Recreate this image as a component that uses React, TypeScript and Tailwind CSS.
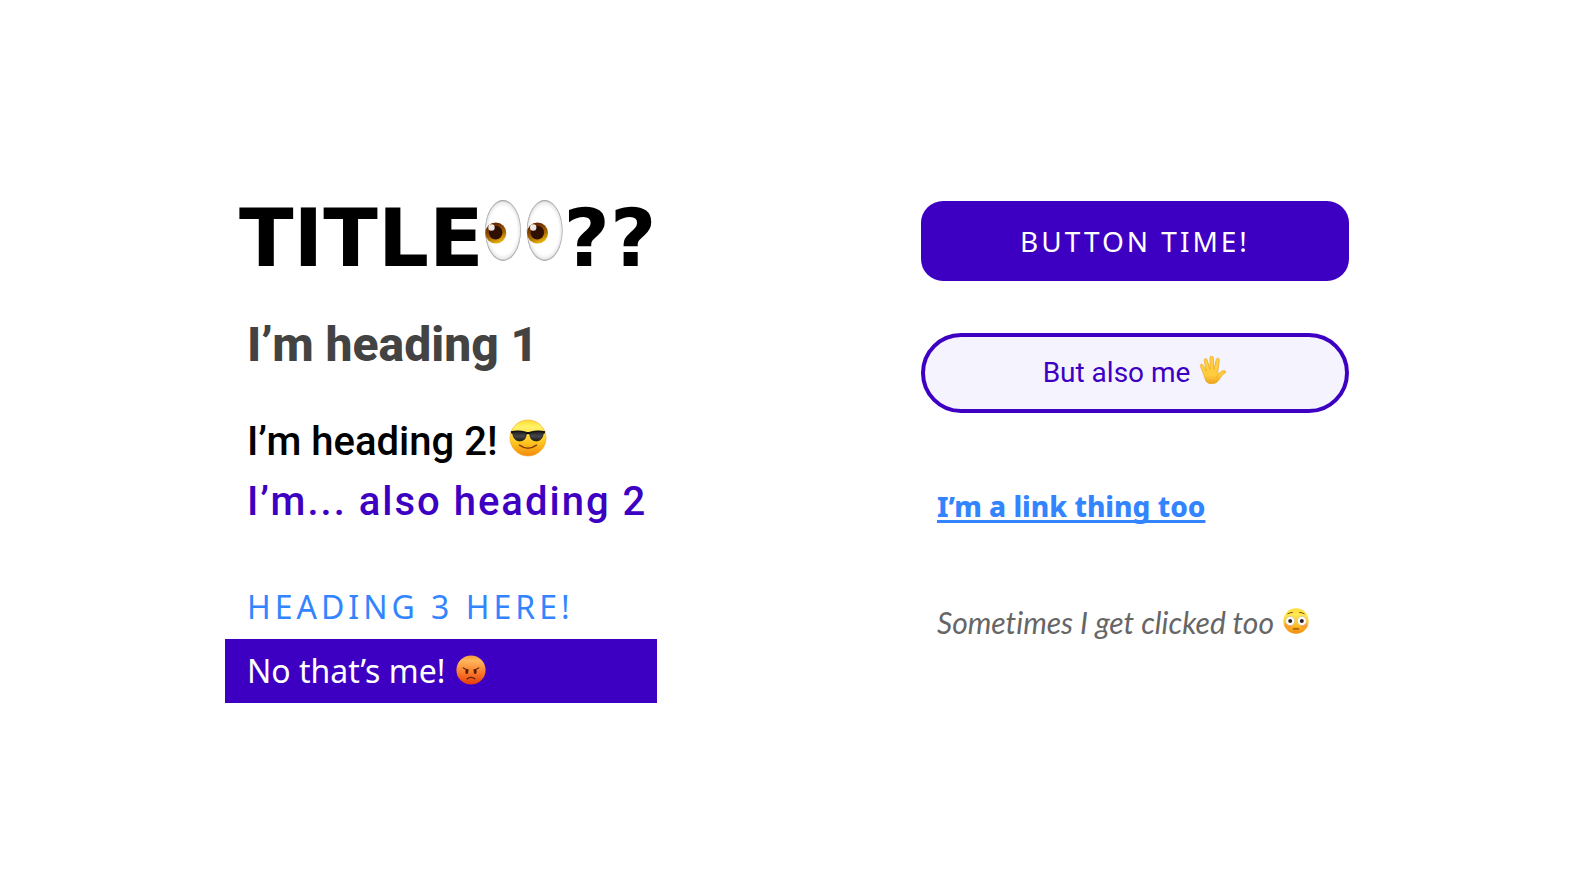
function EyesEmoji() {
  return (
    <svg viewBox="0 0 80 66" role="img" aria-label="eyes" className="inline-block h-[66px] w-[80px] align-baseline">
      <defs>
        <radialGradient id="eye-white">
          <stop offset="0.78" stopColor="#ffffff" />
          <stop offset="0.93" stopColor="#ebebeb" />
          <stop offset="1" stopColor="#979797" />
        </radialGradient>
        <linearGradient id="eye-iris" x1="0.3" y1="0" x2="0.7" y2="1">
          <stop offset="0.15" stopColor="#6b2c00" />
          <stop offset="0.6" stopColor="#a96900" />
          <stop offset="1" stopColor="#f0bd10" />
        </linearGradient>
      </defs>
      {[19, 60.7].map((x) => (
        <g key={x}>
          <ellipse cx={x} cy="30.5" rx="17.9" ry="30.4" fill="url(#eye-white)" />
          <circle cx={x - 7.2} cy="33" r="10.5" fill="url(#eye-iris)" />
          <circle cx={x - 7.4} cy="32.6" r="6.8" fill="#2f1000" />
          <circle cx={x - 11.5} cy="27.5" r="3.2" fill="#ffffff" fillOpacity="0.9" />
        </g>
      ))}
    </svg>
  )
}

function SunglassesEmoji() {
  return (
    <svg viewBox="0 0 38 38" role="img" aria-label="smiling face with sunglasses" className="ml-0.5 inline-block size-[38px] align-[-2px]">
      <defs>
        <linearGradient id="cool-face" x1="0" y1="0" x2="0" y2="1">
          <stop offset="0" stopColor="#ffdf32" />
          <stop offset="0.2" stopColor="#fff26a" />
          <stop offset="0.6" stopColor="#ffc922" />
          <stop offset="1" stopColor="#f58a0a" />
        </linearGradient>
        <linearGradient id="cool-lens" x1="0" y1="0" x2="0" y2="1">
          <stop offset="0" stopColor="#1c1c1e" />
          <stop offset="0.5" stopColor="#48484b" />
          <stop offset="1" stopColor="#19191b" />
        </linearGradient>
      </defs>
      <circle cx="19" cy="19" r="18" fill="url(#cool-face)" stroke="#f2a322" strokeWidth="0.6" />
      <path d="M1.8 12.2 Q10 10.8 17 12.8 Q19 13.4 21 12.8 Q28 10.8 36.2 12.2 L35.8 14.4 L20.6 15.4 Q19 14.6 17.4 15.4 L2.2 14.4Z" fill="#111113" />
      <path d="M3.5 12.6 Q10 11.8 17 13.4 Q18 21.8 10.5 22 Q4 21.8 3.5 12.6Z" fill="url(#cool-lens)" stroke="#111113" strokeWidth="0.7" />
      <path d="M34.5 12.6 Q28 11.8 21 13.4 Q20 21.8 27.5 22 Q34 21.8 34.5 12.6Z" fill="url(#cool-lens)" stroke="#111113" strokeWidth="0.7" />
      <path d="M10.5 26.2 Q19 32.4 27.5 26.2" fill="none" stroke="#80420b" strokeWidth="1.5" strokeLinecap="round" />
    </svg>
  )
}

function AngryEmoji() {
  return (
    <svg viewBox="0 0 30 30" role="img" aria-label="angry face" className="ml-0.5 inline-block size-[30px] align-[-2px]">
      <defs>
        <linearGradient id="angry-face" x1="0" y1="0" x2="0" y2="1">
          <stop offset="0" stopColor="#f89a3c" />
          <stop offset="0.18" stopColor="#ffb75c" />
          <stop offset="0.6" stopColor="#f9792a" />
          <stop offset="1" stopColor="#e73b08" />
        </linearGradient>
      </defs>
      <circle cx="15" cy="15" r="14.6" fill="url(#angry-face)" />
      <ellipse cx="10.8" cy="16.8" rx="1.5" ry="2.3" fill="#5a1d04" />
      <ellipse cx="19.2" cy="16.8" rx="1.5" ry="2.3" fill="#5a1d04" />
      <path d="M7.2 12.8 Q9.3 14.6 12.4 15 M22.8 12.8 Q20.7 14.6 17.6 15" fill="none" stroke="#5a1d04" strokeWidth="1.1" strokeLinecap="round" />
      <path d="M11.3 23.8 Q15 21 18.7 23.8" fill="none" stroke="#5a1d04" strokeWidth="1.4" strokeLinecap="round" />
    </svg>
  )
}

function HandEmoji() {
  return (
    <svg viewBox="0 0 28 28" role="img" aria-label="raised hand" className="ml-0.5 inline-block size-[28px] align-[-2px]">
      <defs>
        <linearGradient id="hand-skin" x1="0" y1="0" x2="0" y2="1">
          <stop offset="0" stopColor="#ffd348" />
          <stop offset="0.7" stopColor="#ffca3e" />
          <stop offset="1" stopColor="#eda21c" />
        </linearGradient>
      </defs>
      <path
        d="M6 22.5 C4.8 19 3.4 14.6 1.4 10.3 C0.7 8.4 3 7.3 4 9.2 L7.3 15 L5.2 4.7 C4.8 2.3 7.5 1.7 8.2 4 L11 13.5 L11 1.9 C11.1 -0.4 14.1 -0.4 14.3 1.9 L14.9 13.4 L17.2 3.7 C17.8 1.4 20.6 2 20.3 4.4 L18.7 16.3 C19 17.6 20 17.6 21 16.6 C22.6 14.8 24.5 14.3 26.2 15 C27.4 15.6 27.1 16.5 26 17 C23.5 18.2 22.4 20.6 20.4 23.2 C18.3 26.5 16.2 27.7 12.5 27.7 C9 27.7 6.8 26.2 6 22.5Z"
        fill="url(#hand-skin)"
        stroke="#e9a51d"
        strokeWidth="0.7"
      />
      <path d="M17.5 22.2 Q17.4 19 20 17.5" fill="none" stroke="#eba928" strokeWidth="0.7" />
    </svg>
  )
}

function FlushedEmoji() {
  return (
    <svg viewBox="0 0 26 26" role="img" aria-label="flushed face" className="ml-0.5 inline-block size-[26px] align-baseline">
      <defs>
        <linearGradient id="flushed-face" x1="0" y1="0" x2="0" y2="1">
          <stop offset="0" stopColor="#ffdc35" />
          <stop offset="0.25" stopColor="#ffe955" />
          <stop offset="0.65" stopColor="#ffc229" />
          <stop offset="1" stopColor="#f28a10" />
        </linearGradient>
      </defs>
      <circle cx="13" cy="13" r="12.7" fill="url(#flushed-face)" />
      <ellipse cx="5" cy="17.2" rx="3.5" ry="2.5" fill="#fb7d3c" fillOpacity="0.5" />
      <ellipse cx="21" cy="17.2" rx="3.5" ry="2.5" fill="#fb7d3c" fillOpacity="0.5" />
      {[7.2, 18.8].map((x) => (
        <g key={x}>
          <circle cx={x} cy="13" r="4.5" fill="#ffffff" stroke="#c9b39a" strokeWidth="0.6" />
          <circle cx={x} cy="13" r="2" fill="#2d2524" />
        </g>
      ))}
      <path d="M4.7 5.8 Q6.6 4.3 9.5 4.5 M21.3 5.8 Q19.4 4.3 16.5 4.5" fill="none" stroke="#8c4a0b" strokeWidth="1" strokeLinecap="round" />
      <path d="M10.5 20.8 H15.5" stroke="#8c4a0b" strokeWidth="1.3" strokeLinecap="round" />
    </svg>
  )
}

export default function App() {
  return (
    <main className="flex min-h-screen items-center bg-white px-6">
      <div className="mx-auto flex w-full max-w-[1124px] flex-wrap items-start justify-between gap-12">
        <section className="w-[432px]">
          <h1 className="pl-3.5 font-['DejaVu_Sans',sans-serif] text-[80px] leading-[112px] font-bold whitespace-nowrap text-black">
            TITLE
            <EyesEmoji />
            ??
          </h1>
          <div className="px-[22px] font-[Roboto,sans-serif] whitespace-nowrap">
            <h2 className="mt-5 text-[48px] leading-[60px] font-extrabold text-[#434343]">I’m heading 1</h2>
            <h3 className="mt-[37px] text-[40px] leading-[60px] font-medium text-black">
              I’m heading 2! <SunglassesEmoji />
            </h3>
            <h3 className="text-[40px] leading-[60px] font-medium tracking-[2px] text-[#3d00c2]">
              I’m... also heading 2
            </h3>
          </div>
          <div className="mt-[43px] font-['Noto_Sans',sans-serif] text-[32px] leading-[64px] whitespace-nowrap">
            <h4 className="px-[22px] tracking-[4px] text-[#3385ff]">HEADING 3 HERE!</h4>
            <h4 className="bg-[#3d00c2] px-[22px] text-white">
              No that’s me! <AngryEmoji />
            </h4>
          </div>
        </section>

        <section className="flex w-[428px] flex-col items-start pt-[18px] text-[28px] whitespace-nowrap">
          <button
            type="button"
            className="h-20 w-full rounded-[22px] bg-[#3d00c2] font-['Noto_Sans',sans-serif] tracking-[3px] text-white"
          >
            BUTTON TIME!
          </button>
          <button
            type="button"
            className="mt-[52px] h-20 w-full rounded-full border-4 border-[#3d00c2] bg-[#f5f3fe] font-[Roboto,sans-serif] text-[#3d00c2]"
          >
            But also me <HandEmoji />
          </button>
          <a
            href="#link"
            className="mt-[73px] ml-4 font-['Noto_Sans',sans-serif] leading-10 font-extrabold text-[#3385ff] underline decoration-[3px] underline-offset-[3px] [text-decoration-skip-ink:none]"
          >
            I’m a link thing too
          </a>
          <button
            type="button"
            className="mt-[76px] ml-4 font-[Lato,sans-serif] text-[30px] leading-10 text-[#666666] italic [font-variant-ligatures:none]"
          >
            Sometimes I get clicked too <FlushedEmoji />
          </button>
        </section>
      </div>
    </main>
  )
}
